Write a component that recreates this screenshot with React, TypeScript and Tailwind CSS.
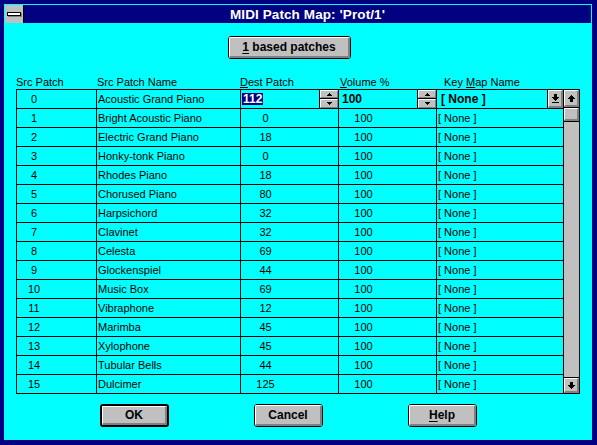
import React from 'react';

const rows: [number, string, number][] = [
  [0, 'Acoustic Grand Piano', 112],
  [1, 'Bright Acoustic Piano', 0],
  [2, 'Electric Grand Piano', 18],
  [3, 'Honky-tonk Piano', 0],
  [4, 'Rhodes Piano', 18],
  [5, 'Chorused Piano', 80],
  [6, 'Harpsichord', 32],
  [7, 'Clavinet', 32],
  [8, 'Celesta', 69],
  [9, 'Glockenspiel', 44],
  [10, 'Music Box', 69],
  [11, 'Vibraphone', 12],
  [12, 'Marimba', 45],
  [13, 'Xylophone', 45],
  [14, 'Tubular Bells', 44],
  [15, 'Dulcimer', 125],
];

function TriUp() {
  return (
    <svg width="5" height="3" viewBox="0 0 5 3" shapeRendering="crispEdges">
      <path d="M2 0h1v1h1v1h1v1H0V2h1V1h1z" fill="black" />
    </svg>
  );
}
function TriDown() {
  return (
    <svg width="5" height="3" viewBox="0 0 5 3" shapeRendering="crispEdges">
      <path d="M0 0h5v1H4v1H3v1H2V2H1V1H0z" fill="black" />
    </svg>
  );
}
function ArrowUp() {
  return (
    <svg width="7" height="7" viewBox="0 0 7 7" shapeRendering="crispEdges">
      <path d="M3 0h1v1h1v1h1v1h1v1H5v3H2V4H0V3h1V2h1V1h1z" fill="black" />
    </svg>
  );
}
function ArrowDown() {
  return (
    <svg width="7" height="7" viewBox="0 0 7 7" shapeRendering="crispEdges">
      <path d="M2 0h3v3h2v1H6v1H5v1H4v1H3V6H2V5H1V4H0V3h2z" fill="black" />
    </svg>
  );
}
function ComboArrow() {
  return (
    <svg width="7" height="9" viewBox="0 0 7 9" shapeRendering="crispEdges">
      <path d="M2 0h3v3h2v1H6v1H5v1H4v1H3V6H2V5H1V4H0V3h2z" fill="black" />
      <rect x="0" y="8" width="7" height="1" fill="black" />
    </svg>
  );
}

function Spinner() {
  return (
    <div className="w-[19px] h-full border-l border-black flex flex-col shrink-0">
      <div className="h-[8px] bg-[#c0c0c0] border-t border-l border-white border-b border-r border-b-[#808080] border-r-[#808080] flex items-center justify-center">
        <TriUp />
      </div>
      <div className="h-px bg-black" />
      <div className="h-[9px] bg-[#c0c0c0] border-t border-l border-white border-b border-r border-b-[#808080] border-r-[#808080] flex items-center justify-center">
        <TriDown />
      </div>
    </div>
  );
}

export default function App() {
  return (
    <div className="w-[597px] h-[445px] bg-[#000080] pt-[4px] pl-[4px] pr-[5px] pb-[5px] font-['Liberation_Sans',Arial,sans-serif] text-black">
      <div className="h-full bg-[#00ffff] flex flex-col">
        {/* Title bar */}
        <div className="mx-[1px] mt-[1px] h-[18px] flex">
          <div className="w-[19px] h-full bg-[#c0c0c0] border-r border-black">
            <div className="ml-[2px] mt-[7px] w-[14px] h-[4px] border border-black bg-white shadow-[1px_1px_0_#808080]" />
          </div>
          <div className="flex-1 bg-[#000080] text-white font-bold text-[13.5px] leading-[18px] tracking-[0.1px] flex items-center justify-center pt-[1px]">
            MIDI Patch Map: 'Prot/1'
          </div>
        </div>

        {/* 1 based patches button */}
        <div className="pl-[224px] mt-[13px]">
          <div className="w-[123px] h-[23px] border border-black rounded-[3px] overflow-hidden">
            <div className="h-full bg-[#c0c0c0] border-t border-l border-white border-b-2 border-r-2 border-b-[#808080] border-r-[#808080] flex items-center justify-center text-[12px] font-bold leading-none">
              <span><span className="underline underline-offset-2">1</span> based patches</span>
            </div>
          </div>
        </div>

        {/* Headers */}
        <div className="mt-[16px] h-[14px] pl-[12px] flex text-[11px] leading-[14px] whitespace-nowrap">
          <div className="w-[81px]">Src Patch</div>
          <div className="w-[143px]">Src Patch Name</div>
          <div className="w-[100px]"><span className="underline underline-offset-1">D</span>est Patch</div>
          <div className="w-[104px]"><span className="underline underline-offset-1">V</span>olume %</div>
          <div>Key <span className="underline underline-offset-1">M</span>ap Name</div>
        </div>

        {/* Table */}
        <div className="pl-[12px] flex">
          <div className="w-[547px] border-l border-t border-black">
            {rows.map(([src, name, dest], i) => (
              <div key={src} className="flex h-[19px] border-b border-black text-[11px] leading-[18px] whitespace-nowrap">
                <div className="w-[80px] border-r border-black">
                  <div className="w-[34px] text-center">{src}</div>
                </div>
                <div className="w-[144px] border-r border-black pl-[1px]">{name}</div>
                {i === 0 ? (
                  <>
                    <div className="w-[98px] border-r border-black flex">
                      <div className="flex-1 flex items-center">
                        <span className="ml-[1px] bg-[#000080] text-white font-bold text-[12px] leading-[12px] px-[1px]">112</span>
                      </div>
                      <Spinner />
                    </div>
                    <div className="w-[98px] border-r border-black flex">
                      <div className="flex-1 pl-[3px] font-bold text-[12px]">100</div>
                      <Spinner />
                    </div>
                    <div className="w-[126px] flex">
                      <div className="flex-1 pl-[4px] font-bold text-[12px] whitespace-pre">[ None ]</div>
                      <div className="w-[16px] h-full border-l border-black shrink-0">
                        <div className="h-full bg-[#c0c0c0] border-t border-l border-white border-b-2 border-r-2 border-b-[#808080] border-r-[#808080] flex items-center justify-center">
                          <ComboArrow />
                        </div>
                      </div>
                    </div>
                  </>
                ) : (
                  <>
                    <div className="w-[98px] border-r border-black">
                      <div className="w-[49px] text-center">{dest}</div>
                    </div>
                    <div className="w-[98px] border-r border-black">
                      <div className="w-[49px] text-center">100</div>
                    </div>
                    <div className="w-[126px] pl-[1px] whitespace-pre">[ None ]</div>
                  </>
                )}
              </div>
            ))}
          </div>

          {/* Scrollbar */}
          <div className="w-[17px] h-[305px] border border-black bg-[#c0c0c0] flex flex-col">
            <div className="h-[17px] border-t border-l border-white border-b-2 border-r-2 border-b-[#808080] border-r-[#808080] flex items-center justify-center">
              <ArrowUp />
            </div>
            <div className="h-px bg-black" />
            <div className="h-[13px] border-t border-l border-white border-b-2 border-r-2 border-b-[#808080] border-r-[#808080]" />
            <div className="h-px bg-black" />
            <div className="flex-1" />
            <div className="h-px bg-black" />
            <div className="h-[15px] border-t border-l border-white border-b-2 border-r-2 border-b-[#808080] border-r-[#808080] flex items-center justify-center">
              <ArrowDown />
            </div>
          </div>
        </div>

        {/* Bottom buttons */}
        <div className="mt-[10px] pl-[96px] flex gap-[85px]">
          <div className="w-[69px] h-[23px] border-2 border-black rounded-[3px] overflow-hidden">
            <div className="h-full bg-[#c0c0c0] border-t border-l border-white border-b-2 border-r-2 border-b-[#808080] border-r-[#808080] flex items-center justify-center text-[12px] font-bold leading-none">
              OK
            </div>
          </div>
          <div className="w-[69px] h-[23px] border border-black rounded-[3px] overflow-hidden">
            <div className="h-full bg-[#c0c0c0] border-t border-l border-white border-b-2 border-r-2 border-b-[#808080] border-r-[#808080] flex items-center justify-center text-[12px] font-bold leading-none">
              Cancel
            </div>
          </div>
          <div className="w-[69px] h-[23px] border border-black rounded-[3px] overflow-hidden">
            <div className="h-full bg-[#c0c0c0] border-t border-l border-white border-b-2 border-r-2 border-b-[#808080] border-r-[#808080] flex items-center justify-center text-[12px] font-bold leading-none">
              <span><span className="underline underline-offset-2">H</span>elp</span>
            </div>
          </div>
        </div>
      </div>
    </div>
  );
}
